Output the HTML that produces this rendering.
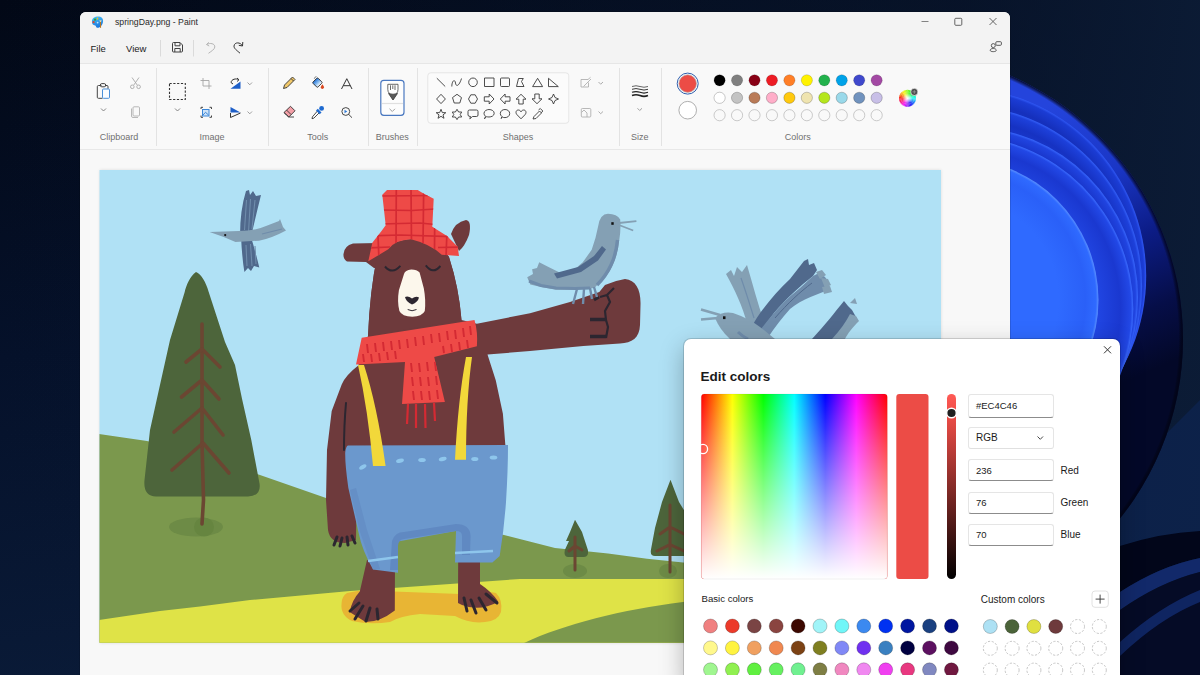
<!DOCTYPE html><html><head><meta charset="utf-8"><style>
*{margin:0;padding:0;box-sizing:border-box}
html,body{width:1200px;height:675px;overflow:hidden;background:#061127;font-family:"Liberation Sans",sans-serif;position:relative}
.a{position:absolute}
.t{position:absolute;white-space:nowrap;color:#1b1b1b;line-height:1}
.lbl{position:absolute;font-size:9px;color:#707070;white-space:nowrap;line-height:1;transform:translateX(-50%)}
.sep{position:absolute;width:1px;background:#e2e2e2}
.box{position:absolute;background:#fff;border:1px solid #e5e5e5;border-bottom:1px solid #8c8c8c;border-radius:3px;font-size:10px;color:#1b1b1b;line-height:1}
svg{position:absolute;overflow:visible}
</style></head><body>
<svg class="a" style="left:0;top:0" width="1200" height="675" viewBox="0 0 1200 675">
<defs>
<linearGradient id="bgv" x1="0" y1="0" x2="0.25" y2="1">
<stop offset="0" stop-color="#020816"/><stop offset="0.5" stop-color="#05112a"/><stop offset="1" stop-color="#0a1b38"/></linearGradient>
<linearGradient id="bgh" x1="0" y1="0" x2="1" y2="0">
<stop offset="0" stop-color="#0b1a33" stop-opacity="0"/><stop offset="0.8" stop-color="#0b1a33" stop-opacity="0.5"/><stop offset="1" stop-color="#0c1c36" stop-opacity="0.9"/></linearGradient>
<linearGradient id="q1" gradientUnits="userSpaceOnUse" x1="1060" y1="100" x2="1175" y2="360"><stop offset="0" stop-color="#2444dc"/><stop offset="0.3" stop-color="#1a36c6"/><stop offset="0.55" stop-color="#0c1c86"/><stop offset="0.8" stop-color="#060e48"/><stop offset="1" stop-color="#030828"/></linearGradient>
<radialGradient id="rim1" gradientUnits="userSpaceOnUse" cx="896" cy="339" r="287"><stop offset="0.9" stop-color="#000" stop-opacity="0"/><stop offset="0.985" stop-color="#000" stop-opacity="0"/><stop offset="1" stop-color="#020418" stop-opacity="0.9"/></radialGradient>
<radialGradient id="pt0" gradientUnits="userSpaceOnUse" cx="957.6" cy="276.2" r="188.6"><stop offset="0" stop-color="#1b3cd4"/><stop offset="0.788" stop-color="#1b3cd4"/><stop offset="0.931" stop-color="#1530bc"/><stop offset="0.987" stop-color="#1b3cd4"/><stop offset="1" stop-color="#3058f4"/></radialGradient>
<radialGradient id="pt1" gradientUnits="userSpaceOnUse" cx="961.1" cy="286.2" r="181.0"><stop offset="0" stop-color="#1d40da"/><stop offset="0.779" stop-color="#1d40da"/><stop offset="0.928" stop-color="#1632c2"/><stop offset="0.986" stop-color="#1d40da"/><stop offset="1" stop-color="#3460f8"/></radialGradient>
<radialGradient id="pt2" gradientUnits="userSpaceOnUse" cx="967.3" cy="297.3" r="170.7"><stop offset="0" stop-color="#2044e0"/><stop offset="0.766" stop-color="#2044e0"/><stop offset="0.924" stop-color="#1834c8"/><stop offset="0.985" stop-color="#2044e0"/><stop offset="1" stop-color="#3866fc"/></radialGradient>
<radialGradient id="pt3" gradientUnits="userSpaceOnUse" cx="959.7" cy="309.1" r="173.6"><stop offset="0" stop-color="#2248e6"/><stop offset="0.770" stop-color="#2248e6"/><stop offset="0.925" stop-color="#1a38d0"/><stop offset="0.986" stop-color="#2248e6"/><stop offset="1" stop-color="#3c6cff"/></radialGradient>
<radialGradient id="pt4" gradientUnits="userSpaceOnUse" cx="957.0" cy="300.0" r="141.5"><stop offset="0" stop-color="#2f6aff"/><stop offset="0.717" stop-color="#2f6aff"/><stop offset="0.908" stop-color="#2a60f8"/><stop offset="0.982" stop-color="#2f6aff"/><stop offset="1" stop-color="#5a90ff"/></radialGradient>
</defs>
<rect width="1200" height="675" fill="url(#bgv)"/>
<rect width="1200" height="675" fill="url(#bgh)"/>
<path d="M1120 480 Q1160 440 1200 400 V533 Q1160 535 1120 546Z" fill="#0e2450" opacity="0.75"/>
<path d="M1120 546 Q1160 533 1200 531 V558 Q1160 566 1120 592Z" fill="#02061a"/>
<path d="M1120 592 Q1160 566 1200 558 V572 Q1160 582 1120 610Z" fill="#12296a"/>
<path d="M1120 610 Q1160 582 1200 572 V675 H1120Z" fill="#050b26"/>
<path d="M1120 642 Q1160 606 1200 590 V602 Q1160 618 1120 656Z" fill="#112868" opacity="0.9"/>
<circle cx="896" cy="339" r="287" fill="url(#q1)"/>
<circle cx="896" cy="339" r="287" fill="url(#rim1)"/>
<circle cx="957.6" cy="276.2" r="188.6" fill="url(#pt0)"/>
<circle cx="961.1" cy="286.2" r="181.0" fill="url(#pt1)"/>
<circle cx="967.3" cy="297.3" r="170.7" fill="url(#pt2)"/>
<circle cx="959.7" cy="309.1" r="173.6" fill="url(#pt3)"/>
<circle cx="957.0" cy="300.0" r="141.5" fill="url(#pt4)"/>
</svg>
<div class="a" style="left:80px;top:11.5px;width:930px;height:670px;background:#f8f8f8;border-radius:6px 6px 0 0;box-shadow:0 0 0 0.5px rgba(0,0,0,.25)"></div>
<div class="a" style="left:80px;top:11.5px;width:930px;height:52px;background:#f3f3f3;border-radius:6px 6px 0 0"></div>
<div class="a" style="left:80px;top:63px;width:930px;height:87px;background:#f9f9f9;border-top:1px solid #e6e6e6;border-bottom:1px solid #e8e8e8"></div>
<div class="a" style="left:99.5px;top:170px;width:841.5px;height:472.8px;background:#b0e1f5;box-shadow:0 0 3px rgba(0,0,0,.12)"></div>
<div class="t" style="left:115px;top:18px;font-size:8.7px;color:#2a2a2a">springDay.png - Paint</div>
<div class="t" style="left:90.5px;top:44px;font-size:9.5px;color:#222">File</div>
<div class="t" style="left:126px;top:44px;font-size:9.5px;color:#222">View</div>
<svg style="left:0;top:0" width="1200" height="675" viewBox="0 0 1200 675">
<defs><linearGradient id="pal" x1="0" y1="0" x2="0.3" y2="1"><stop offset="0" stop-color="#4cc4f4"/><stop offset="1" stop-color="#1a78e0"/></linearGradient></defs>
<g>
<path d="M92 22 C91.5 18 95 16.4 98 16.4 C101.5 16.4 103.2 18.5 103.1 21 C103 24 101.5 26 99.5 27.2 C98 28.2 96.3 28 96 26.5 C95.7 25.2 94.8 25.4 93.6 25 C92.6 24.5 92 23.5 92 22Z" fill="url(#pal)"/>
<circle cx="93.6" cy="22.2" r="1.1" fill="#e0452a"/><circle cx="95" cy="19.7" r="1.1" fill="#2aa83a"/><ellipse cx="97.5" cy="18.7" rx="0.8" ry="1.1" fill="#f2c21a"/>
<circle cx="97.6" cy="22.6" r="0.9" fill="#bfe8ff"/>
<path d="M100.5 21.5 V27.8" stroke="#b8741e" stroke-width="1.1"/>
<path d="M99.3 20.2 L101.7 20.2 L100.9 22 L100.1 22Z" fill="#e8d4a8"/>
</g>
<!-- min max close -->
<path d="M921.5 21.5 H928.5" stroke="#666" stroke-width="0.8"/>
<rect x="954.8" y="18.3" width="7" height="7" rx="1" fill="none" stroke="#555" stroke-width="0.9"/>
<path d="M989.5 18 L996.5 25 M996.5 18 L989.5 25" stroke="#555" stroke-width="0.9"/>
<!-- share icon -->
<g fill="none" stroke="#4a4a4a" stroke-width="0.9">
<circle cx="993.3" cy="45.6" r="2"/>
<path d="M990.2 50.3 C990.2 47.9 996.3 47.9 996.3 50.3 C996.3 52.1 990.2 52.1 990.2 50.3Z"/>
<rect x="995.8" y="41.7" width="5.6" height="3.6" rx="1" fill="#f3f3f3"/>
</g>
<!-- menu separators -->
<path d="M160.5 40 V56.5 M193.5 40 V56.5" stroke="#dadada" stroke-width="1"/>
<!-- save -->
<g fill="none" stroke="#404040" stroke-width="1">
<path d="M172.5 43.5 Q172.5 42.5 173.5 42.5 H180 L182.5 45 V51 Q182.5 52 181.5 52 H173.5 Q172.5 52 172.5 51Z"/>
<path d="M175 42.7 V45.8 H180 V42.7 M174.8 52 V48.5 H180.2 V52"/>
</g>
<!-- undo (disabled) -->
<path d="M206.5 44.5 L208.8 42.3 M206.5 44.5 L209.2 46 M206.7 44.5 C210 42.5 215 43.5 214.8 47 C214.6 49.5 211.5 51 208.5 53.3" fill="none" stroke="#b5b5b5" stroke-width="1"/>
<!-- redo -->
<path d="M242.8 42 L242.5 46 L238.8 45.3 M242.4 45.8 C240.5 42 234.5 41.8 234 46 C233.8 48.5 237 50.5 240 53.2" fill="none" stroke="#333" stroke-width="1"/>
</svg>
<svg style="left:0;top:0" width="1200" height="675" viewBox="0 0 1200 675">
<g stroke="#e3e3e3" stroke-width="1">
<path d="M156.5 68 V146 M268.5 68 V146 M368.5 68 V146 M417.5 68 V146 M619.5 68 V146 M661.5 68 V146"/>
</g>
<!-- paste -->
<g fill="none" stroke-width="1">
<path d="M101.5 85.5 H98.5 Q97.3 85.5 97.3 86.7 V97.3 Q97.3 98.3 98.5 98.3 H102.5" stroke="#444"/>
<path d="M105 85.5 H107 Q108 85.5 108 86.7 V88.8" stroke="#444"/>
<rect x="100.3" y="83.6" width="5.4" height="3.2" rx="1.5" stroke="#444"/>
<rect x="102.5" y="89" width="7" height="9.3" rx="1" stroke="#4a90d9" fill="#fafcff"/>
</g>
<path d="M101 108.5 L103.5 111 L106 108.5" fill="none" stroke="#777" stroke-width="0.9"/>
<!-- scissors -->
<g fill="none" stroke="#a8a8a8" stroke-width="0.9">
<path d="M132 77.5 L137.2 85 M139 77.5 L133.8 85"/>
<circle cx="132.3" cy="86.8" r="1.8"/><circle cx="138.6" cy="86.8" r="1.8"/>
</g>
<!-- copy -->
<g fill="none" stroke="#b0b0b0" stroke-width="0.9">
<rect x="133" y="106.8" width="6.5" height="9.2" rx="1"/>
<path d="M131.5 108.5 V116 Q131.5 117.5 133 117.5 H138"/>
</g>
<!-- select -->
<rect x="169.5" y="83.5" width="15.8" height="16" fill="none" stroke="#333" stroke-width="1.1" stroke-dasharray="2.2 1.6"/>
<path d="M175 108.5 L177.5 111 L180 108.5" fill="none" stroke="#777" stroke-width="0.9"/>
<!-- crop -->
<g fill="none" stroke="#a5a5a5" stroke-width="0.9">
<path d="M203 78 V86 H211.5 M200.5 80.5 H209 V89"/>
</g>
<!-- resize -->
<g fill="none" stroke-width="1">
<path d="M201 109 V107.3 H203 M209.5 107.3 H211.5 V109 M211.5 115.5 V117.3 H209.5 M203 117.3 H201 V115.5" stroke="#444"/>
<rect x="202.5" y="109.5" width="6.5" height="6.5" fill="#cfe3f7" stroke="#3a86d8"/>
<path d="M203 115 L205.5 112.3 L208.5 115" stroke="#3a86d8"/>
</g>
<!-- rotate -->
<g>
<path d="M230.5 88.7 L240.5 81.5 V88.7Z" fill="#1e5fc8"/>
<path d="M231 82.5 C231.5 79 236 78.3 238.5 79.5 M237 78 L239 79.8 L237 81.5" fill="none" stroke="#333" stroke-width="1"/>
<path d="M231 82.5 L233 84" fill="none" stroke="#333" stroke-width="1"/>
</g>
<path d="M247.5 82.5 L249.8 84.8 L252 82.5" fill="none" stroke="#888" stroke-width="0.8"/>
<!-- flip -->
<g>
<path d="M230.5 107 V112.5 H240.5Z" fill="#1e5fc8"/>
<path d="M230.5 113 V117.5 L240.5 113" fill="none" stroke="#333" stroke-width="1"/>
</g>
<path d="M247.5 111.5 L249.8 113.8 L252 111.5" fill="none" stroke="#888" stroke-width="0.8"/>
<!-- pencil -->
<g stroke="#333" stroke-width="0.9" stroke-linejoin="round">
<path d="M283.5 88.5 L284.5 85 L292.5 77 L295 79.5 L287 87.5Z" fill="#f2c96a"/>
<path d="M291 78.5 L293.5 81" fill="none"/>
</g>
<!-- fill bucket -->
<defs><linearGradient id="bkt" x1="0" y1="0" x2="0" y2="1"><stop offset="0" stop-color="#1f6fd6"/><stop offset="0.55" stop-color="#8fc0f0"/><stop offset="1" stop-color="#ffffff"/></linearGradient></defs>
<g transform="translate(317.4 82.6) rotate(-45)"><rect x="-3.6" y="-3.5" width="7.2" height="7" rx="1" fill="url(#bkt)" stroke="#333" stroke-width="0.9"/></g>
<path d="M314.3 78.8 Q314.5 76.8 316.5 76.6" fill="none" stroke="#555" stroke-width="0.7"/>
<path d="M322.4 84.3 Q324.3 86.5 324 87.6 Q323.6 89 322.3 89 Q321 89 320.7 87.6 Q320.6 86.4 322.4 84.3Z" fill="#d9481f"/>
<!-- A -->
<path d="M341.5 89 L346.8 78.7 L352 89 M343.3 85.7 H350.3" fill="none" stroke="#333" stroke-width="1"/>
<!-- eraser -->
<g stroke="#333" stroke-width="0.9" stroke-linejoin="round">
<path d="M284 112.5 L290.5 106.3 L295 110.8 L288.8 117 Z" fill="#f4a0a8"/>
<path d="M284 112.5 L286.8 115.3 L288.8 117 H294" fill="none"/>
<path d="M286.5 110 L291 114.5" fill="none"/>
</g>
<!-- eyedropper -->
<path d="M317.6 110.8 L319.4 112.6 L313.8 118.2 L312 118.7 L312.4 116.9Z" fill="#fff" stroke="#333" stroke-width="0.9" stroke-linejoin="round"/>
<path d="M316.9 109.6 L320.6 113.3" stroke="#1e6ad0" stroke-width="2.6"/>
<circle cx="321.6" cy="108.4" r="2.4" fill="#1e6ad0"/>
<!-- zoom -->
<g fill="none" stroke="#333" stroke-width="0.9">
<circle cx="345.8" cy="111.5" r="3.9"/>
<path d="M348.6 114.3 L352 117.7"/>
</g>
<path d="M344.5 109.7 L347.3 111.5 L344.5 113.3Z" fill="#2f7ad6"/>
<!-- brushes button -->
<rect x="380.8" y="80.3" width="23.2" height="35" rx="3" fill="#fdfdfd" stroke="#4a78c0" stroke-width="1.2"/>
<path d="M382 103.5 H403" stroke="#e0e0e0" stroke-width="1.2"/>
<path d="M389.5 108.8 L392.3 111.5 L395 108.8" fill="none" stroke="#888" stroke-width="0.8"/>
<g stroke="#444" stroke-width="0.8">
<path d="M387.8 84.3 H398 V89.5 Q398 92 396.5 93.5 L393 99.7 L389.5 93.5 Q387.8 92 387.8 89.5Z" fill="#fff"/>
<path d="M388.5 93.5 Q393 95 397.5 93.5 L393 100Z" fill="#5a5a5a"/>
<path d="M390.5 85.3 V90 M392.8 85.3 V89 M395 85.3 V90" fill="none"/>
</g>
<!-- shapes gallery -->
<rect x="427.8" y="72.8" width="141" height="50.5" rx="3" fill="#fbfbfb" stroke="#e6e6e6" stroke-width="1"/>
<g fill="none" stroke="#3a3a3a" stroke-width="0.9" stroke-linejoin="round">
<!-- row1 -->
<path d="M436.8 78.2 L445.2 86.5"/>
<path d="M451.8 86.5 C452 80 455 79 455.5 83 C456 87 459 86.5 461.5 78.5"/>
<circle cx="473" cy="82.3" r="4.3"/>
<rect x="484.5" y="78" width="9.5" height="8.5"/>
<rect x="500.5" y="78" width="9" height="8.5" rx="1"/>
<path d="M516.5 86.5 L518.5 78.5 H523.3 L521.5 81.5 L524 86.5Z"/>
<path d="M532.6 86.6 L537.6 78.3 L542.6 86.6Z"/>
<path d="M548.5 86.6 V78.3 L558.3 86.6Z"/>
<!-- row2 -->
<path d="M441 94.3 L445.4 99 L441 103.6 L436.6 99Z"/>
<path d="M457 94.3 L461.5 97.6 L459.8 103 H454.2 L452.5 97.6Z"/>
<path d="M470.8 94.8 H475.2 L477.5 99 L475.2 103.2 H470.8 L468.5 99Z"/>
<path d="M484.3 96.8 H489.2 V94 L494 99 L489.2 104 V101.2 H484.3Z"/>
<path d="M510 96.8 H505.1 V94 L500.3 99 L505.1 104 V101.2 H510Z"/>
<path d="M518.8 104 V99.2 H516 L521 94.3 L526 99.2 H523.2 V104Z"/>
<path d="M534.8 94 V98.8 H532 L537 103.7 L542 98.8 H539.2 V94Z"/>
<path d="M553.5 94 L555 97.5 L558.5 99 L555 100.5 L553.5 104 L552 100.5 L548.5 99 L552 97.5Z"/>
<!-- row3 -->
<path d="M441 109.3 L442.3 112.6 L445.8 112.7 L443 114.9 L444 118.3 L441 116.3 L438 118.3 L439 114.9 L436.2 112.7 L439.7 112.6Z"/>
<path d="M457 109.3 L458.6 112 L461.7 112 L460.2 114.5 L461.7 117 L458.6 117 L457 119.6 L455.4 117 L452.3 117 L453.8 114.5 L452.3 112 L455.4 112Z"/>
<path d="M469.5 110 H476.5 Q478 110 478 111.5 V115 Q478 116.5 476.5 116.5 H472.5 L469.8 118.8 L470.5 116.5 Q468 116.5 468 115 V111.5 Q468 110 469.5 110Z"/>
<path d="M484.5 118.8 L485.5 116.3 Q484 115 484 113.3 C484 110.8 487 109.5 489 109.5 C491.8 109.5 494.2 111 494.2 113.3 C494.2 115.7 491.5 117 489 117 Q487.5 117 486.5 116.6Z"/>
<path d="M501 118.5 L502 116.5 Q500.3 115.3 500.3 113.6 C500.3 111 502.5 109.5 505 109.5 C507.8 109.5 509.7 111.3 509.7 113.6 C509.7 116 507.5 117.6 505 117.6 Q503.5 117.6 502.5 117.2Z"/>
<path d="M521 118.8 L517 114.7 C515.2 112.8 516 110 518.3 110 C519.6 110 520.5 110.8 521 111.8 C521.5 110.8 522.4 110 523.7 110 C526 110 526.8 112.8 525 114.7Z"/>
<path d="M533 119 L534 116.5 L539.5 111 L541.5 113 L536 118.5Z M538.5 110 L540.3 108.5 L542.8 111 L541.3 112.8"/>
</g>
<!-- outline / fill -->
<g fill="none" stroke="#b0b0b0" stroke-width="0.9">
<path d="M581 79.5 H588 L590.5 77.3 M581 79.5 V87 H588.5 V82.5 M583.5 86.5 L591 79"/>
<rect x="581.3" y="108.5" width="9.5" height="8.5" rx="1"/>
<path d="M581.5 112.5 L584 110 L587 113 V117"/>
</g>
<path d="M598.5 82 L600.7 84.2 L603 82 M598.5 111.5 L600.7 113.7 L603 111.5" fill="none" stroke="#999" stroke-width="0.8"/>
<!-- size -->
<g fill="none" stroke="#222">
<path d="M632 86.5 Q636 85 640 86.5 T648 86.5" stroke-width="0.7"/>
<path d="M632 89.3 Q636 87.8 640 89.3 T648 89.3" stroke-width="0.9"/>
<path d="M632 92.3 Q636 90.8 640 92.3 T648 92.3" stroke-width="1.2"/>
<path d="M632 95.6 Q636 94 640 95.6 T648 95.6" stroke-width="1.6"/>
</g>
<path d="M637.5 108.3 L639.7 110.5 L642 108.3" fill="none" stroke="#888" stroke-width="0.8"/>
</svg>
<div class="lbl" style="left:119px;top:132.5px">Clipboard</div>
<div class="lbl" style="left:212px;top:132.5px">Image</div>
<div class="lbl" style="left:317.7px;top:132.5px">Tools</div>
<div class="lbl" style="left:392.3px;top:132.5px">Brushes</div>
<div class="lbl" style="left:518px;top:132.5px">Shapes</div>
<div class="lbl" style="left:639.7px;top:132.5px">Size</div>
<div class="lbl" style="left:797.7px;top:132.5px">Colors</div>
<svg style="left:0;top:0" width="1200" height="675" viewBox="0 0 1200 675">
<circle cx="687.7" cy="83.6" r="10.5" fill="none" stroke="#2f5fae" stroke-width="1"/>
<circle cx="687.7" cy="83.6" r="8.8" fill="#ec4c46" stroke="#b0b0b0" stroke-width="0.6"/>
<circle cx="687.7" cy="110.2" r="8.8" fill="#ffffff" stroke="#9a9a9a" stroke-width="0.8"/>
<circle cx="719.60" cy="80.3" r="5.6" fill="#000000" stroke="rgba(0,0,0,.25)" stroke-width="0.6"/>
<circle cx="719.60" cy="97.8" r="5.6" fill="#ffffff" stroke="rgba(0,0,0,.35)" stroke-width="0.6"/>
<circle cx="719.60" cy="115.2" r="5.6" fill="none" stroke="#b5b5b5" stroke-width="0.7"/>
<circle cx="737.05" cy="80.3" r="5.6" fill="#7f7f7f" stroke="rgba(0,0,0,.25)" stroke-width="0.6"/>
<circle cx="737.05" cy="97.8" r="5.6" fill="#c3c3c3" stroke="rgba(0,0,0,.35)" stroke-width="0.6"/>
<circle cx="737.05" cy="115.2" r="5.6" fill="none" stroke="#b5b5b5" stroke-width="0.7"/>
<circle cx="754.50" cy="80.3" r="5.6" fill="#880015" stroke="rgba(0,0,0,.25)" stroke-width="0.6"/>
<circle cx="754.50" cy="97.8" r="5.6" fill="#b97a57" stroke="rgba(0,0,0,.35)" stroke-width="0.6"/>
<circle cx="754.50" cy="115.2" r="5.6" fill="none" stroke="#b5b5b5" stroke-width="0.7"/>
<circle cx="771.95" cy="80.3" r="5.6" fill="#ed1c24" stroke="rgba(0,0,0,.25)" stroke-width="0.6"/>
<circle cx="771.95" cy="97.8" r="5.6" fill="#ffaec9" stroke="rgba(0,0,0,.35)" stroke-width="0.6"/>
<circle cx="771.95" cy="115.2" r="5.6" fill="none" stroke="#b5b5b5" stroke-width="0.7"/>
<circle cx="789.40" cy="80.3" r="5.6" fill="#ff7f27" stroke="rgba(0,0,0,.25)" stroke-width="0.6"/>
<circle cx="789.40" cy="97.8" r="5.6" fill="#ffc90e" stroke="rgba(0,0,0,.35)" stroke-width="0.6"/>
<circle cx="789.40" cy="115.2" r="5.6" fill="none" stroke="#b5b5b5" stroke-width="0.7"/>
<circle cx="806.85" cy="80.3" r="5.6" fill="#fff200" stroke="rgba(0,0,0,.25)" stroke-width="0.6"/>
<circle cx="806.85" cy="97.8" r="5.6" fill="#efe4b0" stroke="rgba(0,0,0,.35)" stroke-width="0.6"/>
<circle cx="806.85" cy="115.2" r="5.6" fill="none" stroke="#b5b5b5" stroke-width="0.7"/>
<circle cx="824.30" cy="80.3" r="5.6" fill="#22b14c" stroke="rgba(0,0,0,.25)" stroke-width="0.6"/>
<circle cx="824.30" cy="97.8" r="5.6" fill="#b5e61d" stroke="rgba(0,0,0,.35)" stroke-width="0.6"/>
<circle cx="824.30" cy="115.2" r="5.6" fill="none" stroke="#b5b5b5" stroke-width="0.7"/>
<circle cx="841.75" cy="80.3" r="5.6" fill="#00a2e8" stroke="rgba(0,0,0,.25)" stroke-width="0.6"/>
<circle cx="841.75" cy="97.8" r="5.6" fill="#99d9ea" stroke="rgba(0,0,0,.35)" stroke-width="0.6"/>
<circle cx="841.75" cy="115.2" r="5.6" fill="none" stroke="#b5b5b5" stroke-width="0.7"/>
<circle cx="859.20" cy="80.3" r="5.6" fill="#3f48cc" stroke="rgba(0,0,0,.25)" stroke-width="0.6"/>
<circle cx="859.20" cy="97.8" r="5.6" fill="#7092be" stroke="rgba(0,0,0,.35)" stroke-width="0.6"/>
<circle cx="859.20" cy="115.2" r="5.6" fill="none" stroke="#b5b5b5" stroke-width="0.7"/>
<circle cx="876.65" cy="80.3" r="5.6" fill="#a349a4" stroke="rgba(0,0,0,.25)" stroke-width="0.6"/>
<circle cx="876.65" cy="97.8" r="5.6" fill="#c8bfe7" stroke="rgba(0,0,0,.35)" stroke-width="0.6"/>
<circle cx="876.65" cy="115.2" r="5.6" fill="none" stroke="#b5b5b5" stroke-width="0.7"/>
<defs><radialGradient id="cwW"><stop offset="0" stop-color="#fff"/><stop offset="1" stop-color="#fff" stop-opacity="0"/></radialGradient></defs>
<path d="M907.5 98.3 L916.00 98.30 A8.5 8.5 0 0 1 915.86 99.85Z" fill="hsl(185,95%,55%)"/>
<path d="M907.5 98.3 L915.87 99.78 A8.5 8.5 0 0 1 915.46 101.28Z" fill="hsl(195,95%,55%)"/>
<path d="M907.5 98.3 L915.49 101.21 A8.5 8.5 0 0 1 914.82 102.61Z" fill="hsl(205,95%,55%)"/>
<path d="M907.5 98.3 L914.86 102.55 A8.5 8.5 0 0 1 913.96 103.82Z" fill="hsl(215,95%,55%)"/>
<path d="M907.5 98.3 L914.01 103.76 A8.5 8.5 0 0 1 912.91 104.86Z" fill="hsl(225,95%,55%)"/>
<path d="M907.5 98.3 L912.96 104.81 A8.5 8.5 0 0 1 911.69 105.70Z" fill="hsl(235,95%,55%)"/>
<path d="M907.5 98.3 L911.75 105.66 A8.5 8.5 0 0 1 910.34 106.31Z" fill="hsl(245,95%,55%)"/>
<path d="M907.5 98.3 L910.41 106.29 A8.5 8.5 0 0 1 908.90 106.68Z" fill="hsl(255,95%,55%)"/>
<path d="M907.5 98.3 L908.98 106.67 A8.5 8.5 0 0 1 907.43 106.80Z" fill="hsl(265,95%,55%)"/>
<path d="M907.5 98.3 L907.50 106.80 A8.5 8.5 0 0 1 905.95 106.66Z" fill="hsl(275,95%,55%)"/>
<path d="M907.5 98.3 L906.02 106.67 A8.5 8.5 0 0 1 904.52 106.26Z" fill="hsl(285,95%,55%)"/>
<path d="M907.5 98.3 L904.59 106.29 A8.5 8.5 0 0 1 903.19 105.62Z" fill="hsl(295,95%,55%)"/>
<path d="M907.5 98.3 L903.25 105.66 A8.5 8.5 0 0 1 901.98 104.76Z" fill="hsl(305,95%,55%)"/>
<path d="M907.5 98.3 L902.04 104.81 A8.5 8.5 0 0 1 900.94 103.71Z" fill="hsl(315,95%,55%)"/>
<path d="M907.5 98.3 L900.99 103.76 A8.5 8.5 0 0 1 900.10 102.49Z" fill="hsl(325,95%,55%)"/>
<path d="M907.5 98.3 L900.14 102.55 A8.5 8.5 0 0 1 899.49 101.14Z" fill="hsl(335,95%,55%)"/>
<path d="M907.5 98.3 L899.51 101.21 A8.5 8.5 0 0 1 899.12 99.70Z" fill="hsl(345,95%,55%)"/>
<path d="M907.5 98.3 L899.13 99.78 A8.5 8.5 0 0 1 899.00 98.23Z" fill="hsl(355,95%,55%)"/>
<path d="M907.5 98.3 L899.00 98.30 A8.5 8.5 0 0 1 899.14 96.75Z" fill="hsl(5,95%,55%)"/>
<path d="M907.5 98.3 L899.13 96.82 A8.5 8.5 0 0 1 899.54 95.32Z" fill="hsl(15,95%,55%)"/>
<path d="M907.5 98.3 L899.51 95.39 A8.5 8.5 0 0 1 900.18 93.99Z" fill="hsl(25,95%,55%)"/>
<path d="M907.5 98.3 L900.14 94.05 A8.5 8.5 0 0 1 901.04 92.78Z" fill="hsl(35,95%,55%)"/>
<path d="M907.5 98.3 L900.99 92.84 A8.5 8.5 0 0 1 902.09 91.74Z" fill="hsl(45,95%,55%)"/>
<path d="M907.5 98.3 L902.04 91.79 A8.5 8.5 0 0 1 903.31 90.90Z" fill="hsl(55,95%,55%)"/>
<path d="M907.5 98.3 L903.25 90.94 A8.5 8.5 0 0 1 904.66 90.29Z" fill="hsl(65,95%,55%)"/>
<path d="M907.5 98.3 L904.59 90.31 A8.5 8.5 0 0 1 906.10 89.92Z" fill="hsl(75,95%,55%)"/>
<path d="M907.5 98.3 L906.02 89.93 A8.5 8.5 0 0 1 907.57 89.80Z" fill="hsl(85,95%,55%)"/>
<path d="M907.5 98.3 L907.50 89.80 A8.5 8.5 0 0 1 909.05 89.94Z" fill="hsl(95,95%,55%)"/>
<path d="M907.5 98.3 L908.98 89.93 A8.5 8.5 0 0 1 910.48 90.34Z" fill="hsl(105,95%,55%)"/>
<path d="M907.5 98.3 L910.41 90.31 A8.5 8.5 0 0 1 911.81 90.98Z" fill="hsl(115,95%,55%)"/>
<path d="M907.5 98.3 L911.75 90.94 A8.5 8.5 0 0 1 913.02 91.84Z" fill="hsl(125,95%,55%)"/>
<path d="M907.5 98.3 L912.96 91.79 A8.5 8.5 0 0 1 914.06 92.89Z" fill="hsl(135,95%,55%)"/>
<path d="M907.5 98.3 L914.01 92.84 A8.5 8.5 0 0 1 914.90 94.11Z" fill="hsl(145,95%,55%)"/>
<path d="M907.5 98.3 L914.86 94.05 A8.5 8.5 0 0 1 915.51 95.46Z" fill="hsl(155,95%,55%)"/>
<path d="M907.5 98.3 L915.49 95.39 A8.5 8.5 0 0 1 915.88 96.90Z" fill="hsl(165,95%,55%)"/>
<path d="M907.5 98.3 L915.87 96.82 A8.5 8.5 0 0 1 916.00 98.37Z" fill="hsl(175,95%,55%)"/>
<circle cx="907.5" cy="98.3" r="5" fill="url(#cwW)"/>
<circle cx="914.3" cy="91.9" r="3.6" fill="#4a4a4a" stroke="#f9f9f9" stroke-width="0.7"/>
<path d="M912.3 91.9 H916.3 M914.3 89.9 V93.9" stroke="#aaa" stroke-width="0.6"/>
</svg>
<svg style="left:0;top:0" width="1200" height="675" viewBox="0 0 1200 675">
<defs>
<clipPath id="cv"><rect x="99.5" y="170" width="841.5" height="472.8"/></clipPath>
<clipPath id="hatc"><path d="M382.3 194.7 L387 190 L417.7 190 L423 193.3 L433.7 198.7 L432.3 226.7 L447 236 L457.7 246.7 L459 256 L441.7 254.7 Q430 244 411 239.3 Q395 240 388.3 249.3 L368.3 261.3 L372.3 242.7 L381.7 230.7 L385.7 225.3Z"/></clipPath>
<clipPath id="scfc"><path d="M361.7 337.8 L474.5 320 Q478 332 476.9 346.2 L434.2 357 L444.9 402 L402 404 L405 362 L356 364.4Z"/></clipPath>
</defs>
<g clip-path="url(#cv)">
<rect x="99" y="169" width="843" height="475" fill="#b0e1f5"/>
<!-- hills -->
<path d="M99 434 L147 441 L200 455 L260 475 L326 498 L420 520 L500 534 L555 548 L608 553.5 L647 558.8 L683 562.4 L760 566 L942 570 V645 H99Z" fill="#7b984d"/>
<path d="M99 620 L160 611 L200 606.5 L250 600 L350 591 L450 584 L520 579 L600 579 L683 579 L800 576 L942 575 V645 H99Z" fill="#dfe347"/>
<path d="M520 645 C560 625 620 610 683 602 L800 590 L942 585 V645Z" fill="#7b984d"/>
<!-- tree 1 -->
<ellipse cx="196" cy="527" rx="27" ry="9.5" fill="#6d8b46"/>
<ellipse cx="204" cy="527" rx="10" ry="9.5" fill="#668540"/>
<path d="M196 272 C190 276 186 286 184.7 292 L170 340 L159.3 388 L150 430 L144.5 480 Q143 496 156 496.5 L248 496.5 Q261 496 259.6 484 L251.3 440 L242 398.7 L235 365 L225 342 L208.7 292 C206 282 201 274 196 272Z" fill="#4d653b"/>
<g stroke="#6b4632" stroke-width="3.6" fill="none" stroke-linecap="round" stroke-linejoin="round">
<path d="M202 324 V443 L203.5 500 L202 524"/>
<path d="M202 349 L186 362 M202 349 L220 367 M202 380 L181.5 397 M202 380 L219 399 M202 408 L174 432 M202 408 L223 435 M203 443 L172 470 M203 443 L229 473"/>
</g>
<!-- small trees right -->
<ellipse cx="575" cy="571" rx="12" ry="7" fill="#6d8b46"/>
<path d="M575 519.7 L570 532 L566 541 L569 541 L564.8 550 Q563.5 557 568 557 H584 Q589 557 587.9 550 L582 532Z" fill="#4d653b"/>
<path d="M575 537 V570 M575 546 L569 551 M575 546 L582 550" stroke="#6b4632" stroke-width="3" fill="none" stroke-linecap="round"/>
<ellipse cx="668" cy="571" rx="9" ry="7" fill="#6d8b46"/>
<path d="M670.5 479.8 L662 502 L655 528 L650.9 550 Q650 556 655 556 H690 L690 520 L679 502Z" fill="#4d653b"/>
<path d="M670 505 V572 M670 527 L660 534 M670 527 L684 534 M670 544.6 L657 551 M670 544.6 L684 551" stroke="#6b4632" stroke-width="3" fill="none" stroke-linecap="round"/>

<!-- bear: shadow -->
<path d="M347 593 Q362 589 380 591 L460 594 Q480 589 496 593 Q503 600 501 612 Q498 621 485 622 Q470 624 455 616 L420 614 Q400 616 390 622 Q370 625 352 621 Q340 615 341.6 603 Q342 596 347 593Z" fill="#e8b534"/>
<!-- body -->
<path d="M377 257 Q370 290 368 336 L358.3 365.6 Q346 375 341.7 384.4 L331.7 411 L327 450 L326 500 L328 530 Q330 543 345 543 L356 540 L357 470 L487 460 L507 450 L505.3 444.5 L502.9 413.7 L495.8 380.6 L487.5 354.5 L530 351 L583.3 346 L620 343.5 C632 343 639.5 338 640 325 L640.5 305 C641 290 636 280 625 279 Q615 280.5 605 285 L599.3 292 L570 302 L530 313.3 L476.9 323.7 L461.5 320 Q459 288 449 257 Q436 238 412 239 Q390 240 377 257Z" fill="#6e3a3c"/>
<!-- ears -->
<path d="M343.5 254 Q344 246 353 243.5 L378 243 L382 268 L374 268 L366 262 L347 261.5 Q343 259 343.5 254Z" fill="#6e3a3c"/>
<path d="M466 220 Q472 221 469 235 Q465 246 459 251 L451 234 Q455 222 466 220Z" fill="#6e3a3c"/>
<!-- legs/feet -->
<path d="M367 560 L395 560 L394.8 610.4 Q380 622 365.6 622 L349.6 612 Q352 600 359.8 591.5Z" fill="#6e3a3c"/>
<path d="M458.2 555 L480 555 L480 584 Q492 592 498.3 601.7 Q480 612 462 605 L458 603Z" fill="#6e3a3c"/>
<!-- claws -->
<g stroke="#2c2630" stroke-width="3" fill="none" stroke-linecap="round">
<path d="M359 603 L350 611 M363 606 L355 619 M370 608 L366 621 M377 609 L378 619"/>
<path d="M464 598 L467 611 M471 600 L476 613 M479 598 L486 610 M486 594 L497 603"/>
<path d="M337 537 L334 545 M342 538 L340 546 M347 537 L348 545 M352 536 L355 543"/>
<path d="M346 403 Q344 425 344 450" stroke-width="2"/>
</g>
<!-- pants -->
<path d="M348 445.5 L508 445 Q508 470 506 502 Q504 530 499.7 556 L492.4 562.4 L455 562.4 L456 531 L398 541.6 L398 572.7 L373 569.6 Q362 550 358.7 533.3 L348.3 487.7 Q345 465 345.2 452.4 Q346 446 348 445.5Z" fill="#6b98cd"/>
<path d="M390 570 L392 541 Q395 532 404 532 L456 524 Q470 524 470.6 536 L470 555 L462 555 L462 536 Q462 531 456 531 L404 539 Q398 540 398 546 L398 570Z" fill="#6089c2"/>
<path d="M350 490 L360 532 L373 569.6 L380 569 L367 530 L356 488Z" fill="#6089c2" opacity="0.6"/>
<path d="M368 561 L398 557 M455 553 L493 551" stroke="#8ec6ec" stroke-width="2.6"/>
<g fill="#8ec6ec">
<ellipse cx="362.8" cy="467" rx="4" ry="2" transform="rotate(-30 362.8 467)"/>
<ellipse cx="400" cy="460.7" rx="4" ry="2" transform="rotate(-15 400 460.7)"/>
<ellipse cx="422" cy="460" rx="3.8" ry="2"/>
<ellipse cx="442.7" cy="459" rx="4" ry="2" transform="rotate(-15 442.7 459)"/>
<ellipse cx="474.8" cy="459" rx="3.6" ry="2"/>
<ellipse cx="493.5" cy="457.4" rx="3.8" ry="2"/>
</g>
<!-- suspenders -->
<path d="M358 365 L364 365 Q377 405 385.6 466 L373 466 Q368 410 358 365Z" fill="#f2d83a"/>
<path d="M466 357 L472 357 Q466 400 466 459.7 L455 459.7 Q458 400 466 357Z" fill="#f2d83a"/>
<!-- scarf -->
<g clip-path="url(#scfc)">
<rect x="350" y="315" width="130" height="95" fill="#ee4a47"/>
<g stroke="#d42a33" stroke-width="1.9" fill="none">
<path d="M367 344 L368 353 M375 343 L376 352 M383 342 L384 351 M391 341 L392 350 M399 340 L400 349 M407 339 L408 348 M415 337 L416 346 M423 336 L424 345 M431 334 L432 343 M439 333 L440 342 M447 331 L448 340 M455 330 L456 339 M463 328 L464 337 M470 326 L471 335"/>
<path d="M363 354 L364 362 M371 354 L372 362 M379 353 L380 361 M387 352 L388 360 M395 351 L396 359 M443 346 L444 353 M451 344 L452 352 M459 342 L460 350 M467 340 L468 348"/>
<path d="M411 363 L412 372 M419 363 L420 372 M427 362 L428 371 M435 362 L436 371 M412 377 L413 386 M420 377 L421 386 M428 377 L429 386 M436 376 L437 385 M413 391 L414 400 M421 391 L422 400 M429 391 L430 400 M437 390 L438 399"/>
</g>
</g>
<path d="M408 404 L407 424 M416 404 L416 428 M425 404 L425.5 428 M434 403 L435 421" stroke="#d42a33" stroke-width="2.2" fill="none"/>
<!-- head -->
<path d="M377 257 Q370 290 368 336 L461.5 320 Q459 288 449 257 Q436 238 412 239 Q390 240 377 257Z" fill="#6e3a3c"/>
<!-- hat -->
<g clip-path="url(#hatc)">
<rect x="360" y="185" width="105" height="80" fill="#ee4a47"/>
<g stroke="#d42a33" stroke-width="1.7" fill="none">
<path d="M396.3 188 L396 250 M411 188 L411.5 242 M423.7 188 L423 245 M435 188 L434.5 250 M447 230 L446 258 M378 236 L379 260"/>
<path d="M380 196 L435 195.5 M380 210 L412 210.5 L435 209 M380 224 L420 223 L435 224.5 M368 236 L400 235 L460 237 M365 248 L390 247 M438 247.5 L462 247"/>
</g>
</g>
<!-- muzzle -->
<path d="M411.3 269.5 Q405 270 404 274 L398.9 290.3 Q397 302 399.4 311 Q402 316.7 412.3 316.7 Q422 316.7 424.8 311 Q426 300 423.8 288.2 L419.6 272.6 Q417 269.5 411.3 269.5Z" fill="#fcf7ec"/>
<path d="M405 297 Q408 295.5 412 298.5 Q416 295.5 419 297.5 Q418 302 412 304.5 Q406 302 405 297Z" fill="#2c2630"/>
<path d="M407.7 309.5 Q412 312 416.5 309.5" stroke="#2c2630" stroke-width="1" fill="none"/>
<path d="M385 266.5 Q392 275 400.4 265.9 M425.8 265.4 Q433 275 440.4 266" stroke="#2c2630" stroke-width="2" fill="none"/>
<!-- paw marks -->
<g stroke="#2c2630" fill="none" stroke-linejoin="round" stroke-linecap="butt">
<path d="M614 288 L607 295 L600 297 M607 295 L610 302 L605 311 L606 320 L608 327 L606 338" stroke-width="2.2"/>
<path d="M590 319.5 H606 M590 336.5 H606" stroke-width="3.6"/>
<path d="M599 297 L594 300" stroke-width="3"/>
</g>
<!-- bird 1 -->
<g>
<path d="M240 236 Q240 210 246 191 L249 190 L250 195 L253 191 L256 196 L261 195 Q256 215 251 237Z" fill="#50698c"/>
<path d="M246.5 200 L244.5 230 M250.5 199 L248.5 232 M255 200 L252 229" stroke="#6f8cab" stroke-width="1.1" fill="none"/>
<path d="M241 236 Q242 258 244.4 272 L248 268 L251 271 L254 266 L259.3 267.4 Q255 250 251 237Z" fill="#50698c"/>
<path d="M246 245 L247 266 M250.5 244 L252 266 M255 246 L256 264" stroke="#6f8cab" stroke-width="1.1" fill="none"/>
<path d="M209.6 232 L238.5 231 Q255 231 266 226 L279 221 L280 219 L283 227 L286 230.4 Q272 238 259 240.7 L235.5 242 Q222 236 209.6 232Z" fill="#84a0b4"/>
<path d="M262 234 L282 229" stroke="#6f8cab" stroke-width="1.2"/>
<circle cx="225.2" cy="235.1" r="1.1" fill="#111"/>
</g>
<!-- bird 2 -->
<g>
<path d="M598.2 226 Q600 214 608 213.8 Q617 214 620.2 219.5 Q621 230 619.3 240 Q618 252 613.9 262.2 Q610 272 605 277.3 L594.3 288 L574.8 289.8 L556 289.8 L541 287.1 L530.3 284.4 L527.2 277.3 L533 274 L532.1 269.3 L537 268 L539.2 262.2 L548 266.7 L560.6 273 L574.8 269.3 L582.8 262.2 L591.7 249.8 Q596 238 598.2 226Z" fill="#84a0b4"/>
<path d="M554 273.5 L578 267 L594 256 L602 246 L606 249.5 L598 260.5 L581 272 L557 278.5Z" fill="#50698c"/>
<path d="M617.5 240 Q616 255 611 265 Q606 276 597 285" stroke="#6f8cab" stroke-width="3.4" fill="none"/>
<path d="M529 281 L541 285.5 L556 288 L575 288.5 L590 288" stroke="#6f8cab" stroke-width="3" fill="none"/>
<path d="M619 223 L636.4 221.2 M619 225 L633.2 230.5" stroke="#84a0b4" stroke-width="1.8"/>
<rect x="611.3" y="222.2" width="2.4" height="2.6" fill="#111"/>
<path d="M577 289 L573 304 M584 289 L583 304 M590 288 L592 299 M594 287 L597 297" stroke="#6f8cab" stroke-width="2.4"/>
</g>
<!-- bird 3 -->
<g>
<path d="M748 326 C742 305 735 290 726 274 L731 270 L734 276 L737 267 L742 272 L747 265 C753 285 758 305 765 324Z" fill="#84a0b4"/>
<path d="M741 278 C746 292 750 305 754 318" stroke="#6f8cab" stroke-width="1.2" fill="none"/>
<path d="M751 328 C760 311 775 293 790 279 L804 261 L808 259 L809 265 L814 263 L817 270 L813 276 C800 286 786 299 774 313 L760 332Z" fill="#50698c"/>
<path d="M758 333 C772 314 786 299 800 288 L813 276 L819 273 L825 277 L829 283 L828 290 L810.5 297 C803 300 796 304 790 309 C782 318 775 327 769 336 L765 339 L756 339Z" fill="#6f8cab"/>
<path d="M816 272 L822 270 L826 275 L820 279Z M821 278 L828 279 L831 285 L825 288Z M822 287 L830 286 L832 292 L824 294Z" fill="#84a0b4"/>
<path d="M775 318 C788 303 800 292 812 283" stroke="#50698c" stroke-width="1" fill="none"/>
<path d="M701 309.5 L720 315 M701 319.5 L718 318" stroke="#84a0b4" stroke-width="2.6" fill="none"/>
<path d="M715 318 Q722 311 733 313 Q748 318 760 327 L775 339 L730 339 Q720 330 715 318Z" fill="#84a0b4"/>
<path d="M738 332 Q742 336 748 339" stroke="#6f8cab" stroke-width="3" fill="none"/>
<path d="M812 339 C825 325 835 312 844 301 L848 306 L852 310 L858 320.5 C848 328 843 333 838 339Z" fill="#50698c"/>
<path d="M832 339 C840 330 846 322 850 314 L856 316 L859 321 C852 328 848 333 845 339Z" fill="#84a0b4"/>
<path d="M850 303 L855 298 L857 304Z" fill="#84a0b4"/>
<rect x="723" y="316.3" width="2.5" height="2.8" fill="#111"/>
</g>
</g>
</svg>
<div class="a" style="left:684px;top:339px;width:436px;height:345px;background:#ffffff;border-radius:7px;box-shadow:0 0 0 1px rgba(0,0,0,.14),0 8px 24px rgba(0,0,0,.28)"></div>
<div class="t" style="left:700.5px;top:369.5px;font-size:13.5px;font-weight:bold;color:#1a1a1a">Edit colors</div>
<svg style="left:0;top:0" width="1200" height="675" viewBox="0 0 1200 675">
<defs>
<linearGradient id="hue" x1="0" y1="0" x2="1" y2="0">
<stop offset="0" stop-color="#ff0000"/><stop offset="0.1667" stop-color="#ffff00"/><stop offset="0.3333" stop-color="#00ff00"/><stop offset="0.5" stop-color="#00ffff"/><stop offset="0.6667" stop-color="#0000ff"/><stop offset="0.8333" stop-color="#ff00ff"/><stop offset="1" stop-color="#ff0000"/>
</linearGradient>
<linearGradient id="wht" x1="0" y1="0" x2="0" y2="1">
<stop offset="0" stop-color="#ffffff" stop-opacity="0"/><stop offset="1" stop-color="#ffffff" stop-opacity="1"/>
</linearGradient>
<linearGradient id="sld" x1="0" y1="0" x2="0" y2="1">
<stop offset="0" stop-color="#ff5a55"/><stop offset="0.12" stop-color="#ec4c46"/><stop offset="1" stop-color="#000000"/>
</linearGradient>
</defs>
<rect x="701.3" y="394" width="186" height="185" rx="3" fill="url(#hue)"/>
<rect x="701.3" y="394" width="186" height="185" rx="3" fill="url(#wht)"/>
<rect x="701.3" y="394" width="186" height="185" rx="3" fill="none" stroke="rgba(0,0,0,.06)" stroke-width="1"/>
<circle cx="703" cy="449" r="4.6" fill="none" stroke="#fff" stroke-width="1.3"/>
<rect x="896.3" y="394" width="32.2" height="185" rx="3" fill="#ec4c46"/>
<rect x="947" y="394" width="9" height="185" rx="4.5" fill="url(#sld)"/>
<circle cx="951.5" cy="413" r="4.8" fill="#1f1f1f" stroke="#fff" stroke-width="1.4"/>
<path d="M1104 346.3 L1111 353.3 M1111 346.3 L1104 353.3" stroke="#333" stroke-width="1"/>
</svg>
<div class="box" style="left:968px;top:394.2px;width:86px;height:23.5px"></div>
<div class="t" style="left:976px;top:401.3px;font-size:9.5px;color:#1b1b1b">#EC4C46</div>
<div class="box" style="left:968px;top:459.3px;width:86px;height:22.2px"></div>
<div class="t" style="left:976px;top:465.8px;font-size:9.5px;color:#1b1b1b">236</div>
<div class="box" style="left:968px;top:491.5px;width:86px;height:22.8px"></div>
<div class="t" style="left:976px;top:498.3px;font-size:9.5px;color:#1b1b1b">76</div>
<div class="box" style="left:968px;top:523.6px;width:86px;height:22.9px"></div>
<div class="t" style="left:976px;top:530.4px;font-size:9.5px;color:#1b1b1b">70</div>
<div class="box" style="left:968px;top:427px;width:86px;height:22px;border-bottom-color:#e0e0e0"></div>
<div class="t" style="left:976px;top:432.8px;font-size:10px;color:#1b1b1b">RGB</div>
<svg style="left:0;top:0" width="1200" height="675" viewBox="0 0 1200 675"><path d="M1037.5 436.5 L1040.3 439.3 L1043 436.5" fill="none" stroke="#333" stroke-width="0.9"/></svg>
<div class="t" style="left:1060.5px;top:465.8px;font-size:10px;color:#1b1b1b">Red</div>
<div class="t" style="left:1060.5px;top:498.4px;font-size:10px;color:#1b1b1b">Green</div>
<div class="t" style="left:1060.5px;top:530.4px;font-size:10px;color:#1b1b1b">Blue</div>
<div class="t" style="left:701.5px;top:594px;font-size:9.6px;color:#1b1b1b">Basic colors</div>
<div class="t" style="left:980.8px;top:594.5px;font-size:10px;color:#1b1b1b">Custom colors</div>
<svg style="left:0;top:0" width="1200" height="675" viewBox="0 0 1200 675">
<rect x="1092" y="591" width="16.3" height="16.3" rx="3" fill="#fff" stroke="#e2e2e2" stroke-width="1"/>
<path d="M1095.6 599.1 H1104.6 M1100.1 594.6 V603.6" stroke="#333" stroke-width="0.9"/>
<circle cx="710.5" cy="626.0" r="7" fill="#f08080" stroke="rgba(0,0,0,.3)" stroke-width="0.7"/>
<circle cx="732.4" cy="626.0" r="7" fill="#ec3a2a" stroke="rgba(0,0,0,.3)" stroke-width="0.7"/>
<circle cx="754.3" cy="626.0" r="7" fill="#7a4444" stroke="rgba(0,0,0,.3)" stroke-width="0.7"/>
<circle cx="776.2" cy="626.0" r="7" fill="#8a4440" stroke="rgba(0,0,0,.3)" stroke-width="0.7"/>
<circle cx="798.1" cy="626.0" r="7" fill="#3c0800" stroke="rgba(0,0,0,.3)" stroke-width="0.7"/>
<circle cx="820.0" cy="626.0" r="7" fill="#a0f4f8" stroke="rgba(0,0,0,.3)" stroke-width="0.7"/>
<circle cx="841.9" cy="626.0" r="7" fill="#70f6f8" stroke="rgba(0,0,0,.3)" stroke-width="0.7"/>
<circle cx="863.8" cy="626.0" r="7" fill="#3b89f0" stroke="rgba(0,0,0,.3)" stroke-width="0.7"/>
<circle cx="885.7" cy="626.0" r="7" fill="#0031f2" stroke="rgba(0,0,0,.3)" stroke-width="0.7"/>
<circle cx="907.6" cy="626.0" r="7" fill="#0016a0" stroke="rgba(0,0,0,.3)" stroke-width="0.7"/>
<circle cx="929.5" cy="626.0" r="7" fill="#1a4080" stroke="rgba(0,0,0,.3)" stroke-width="0.7"/>
<circle cx="951.4" cy="626.0" r="7" fill="#001088" stroke="rgba(0,0,0,.3)" stroke-width="0.7"/>
<circle cx="710.5" cy="647.9" r="7" fill="#fff88c" stroke="rgba(0,0,0,.3)" stroke-width="0.7"/>
<circle cx="732.4" cy="647.9" r="7" fill="#fff340" stroke="rgba(0,0,0,.3)" stroke-width="0.7"/>
<circle cx="754.3" cy="647.9" r="7" fill="#f0a060" stroke="rgba(0,0,0,.3)" stroke-width="0.7"/>
<circle cx="776.2" cy="647.9" r="7" fill="#f08850" stroke="rgba(0,0,0,.3)" stroke-width="0.7"/>
<circle cx="798.1" cy="647.9" r="7" fill="#7c4214" stroke="rgba(0,0,0,.3)" stroke-width="0.7"/>
<circle cx="820.0" cy="647.9" r="7" fill="#7f7f20" stroke="rgba(0,0,0,.3)" stroke-width="0.7"/>
<circle cx="841.9" cy="647.9" r="7" fill="#8088f6" stroke="rgba(0,0,0,.3)" stroke-width="0.7"/>
<circle cx="863.8" cy="647.9" r="7" fill="#7030f0" stroke="rgba(0,0,0,.3)" stroke-width="0.7"/>
<circle cx="885.7" cy="647.9" r="7" fill="#3a80c0" stroke="rgba(0,0,0,.3)" stroke-width="0.7"/>
<circle cx="907.6" cy="647.9" r="7" fill="#000040" stroke="rgba(0,0,0,.3)" stroke-width="0.7"/>
<circle cx="929.5" cy="647.9" r="7" fill="#5c1060" stroke="rgba(0,0,0,.3)" stroke-width="0.7"/>
<circle cx="951.4" cy="647.9" r="7" fill="#3e0840" stroke="rgba(0,0,0,.3)" stroke-width="0.7"/>
<circle cx="710.5" cy="669.8" r="7" fill="#a0f690" stroke="rgba(0,0,0,.3)" stroke-width="0.7"/>
<circle cx="732.4" cy="669.8" r="7" fill="#90f050" stroke="rgba(0,0,0,.3)" stroke-width="0.7"/>
<circle cx="754.3" cy="669.8" r="7" fill="#60f040" stroke="rgba(0,0,0,.3)" stroke-width="0.7"/>
<circle cx="776.2" cy="669.8" r="7" fill="#66f060" stroke="rgba(0,0,0,.3)" stroke-width="0.7"/>
<circle cx="798.1" cy="669.8" r="7" fill="#70f090" stroke="rgba(0,0,0,.3)" stroke-width="0.7"/>
<circle cx="820.0" cy="669.8" r="7" fill="#7e7e44" stroke="rgba(0,0,0,.3)" stroke-width="0.7"/>
<circle cx="841.9" cy="669.8" r="7" fill="#f088c0" stroke="rgba(0,0,0,.3)" stroke-width="0.7"/>
<circle cx="863.8" cy="669.8" r="7" fill="#f088f0" stroke="rgba(0,0,0,.3)" stroke-width="0.7"/>
<circle cx="885.7" cy="669.8" r="7" fill="#f040f0" stroke="rgba(0,0,0,.3)" stroke-width="0.7"/>
<circle cx="907.6" cy="669.8" r="7" fill="#e83880" stroke="rgba(0,0,0,.3)" stroke-width="0.7"/>
<circle cx="929.5" cy="669.8" r="7" fill="#8088c0" stroke="rgba(0,0,0,.3)" stroke-width="0.7"/>
<circle cx="951.4" cy="669.8" r="7" fill="#701840" stroke="rgba(0,0,0,.3)" stroke-width="0.7"/>
<circle cx="990.3" cy="626.5" r="7" fill="#ade1f4" stroke="rgba(0,0,0,.3)" stroke-width="0.7"/>
<circle cx="1012.1" cy="626.5" r="7" fill="#4b6339" stroke="rgba(0,0,0,.3)" stroke-width="0.7"/>
<circle cx="1033.9" cy="626.5" r="7" fill="#e0e040" stroke="rgba(0,0,0,.3)" stroke-width="0.7"/>
<circle cx="1055.7" cy="626.5" r="7" fill="#6e3a3c" stroke="rgba(0,0,0,.3)" stroke-width="0.7"/>
<circle cx="1077.5" cy="626.5" r="7" fill="none" stroke="#b8b8b8" stroke-width="0.8" stroke-dasharray="2.2 1.6"/>
<circle cx="1099.3" cy="626.5" r="7" fill="none" stroke="#b8b8b8" stroke-width="0.8" stroke-dasharray="2.2 1.6"/>
<circle cx="990.3" cy="648.3" r="7" fill="none" stroke="#b8b8b8" stroke-width="0.8" stroke-dasharray="2.2 1.6"/>
<circle cx="1012.1" cy="648.3" r="7" fill="none" stroke="#b8b8b8" stroke-width="0.8" stroke-dasharray="2.2 1.6"/>
<circle cx="1033.9" cy="648.3" r="7" fill="none" stroke="#b8b8b8" stroke-width="0.8" stroke-dasharray="2.2 1.6"/>
<circle cx="1055.7" cy="648.3" r="7" fill="none" stroke="#b8b8b8" stroke-width="0.8" stroke-dasharray="2.2 1.6"/>
<circle cx="1077.5" cy="648.3" r="7" fill="none" stroke="#b8b8b8" stroke-width="0.8" stroke-dasharray="2.2 1.6"/>
<circle cx="1099.3" cy="648.3" r="7" fill="none" stroke="#b8b8b8" stroke-width="0.8" stroke-dasharray="2.2 1.6"/>
<circle cx="990.3" cy="670.1" r="7" fill="none" stroke="#b8b8b8" stroke-width="0.8" stroke-dasharray="2.2 1.6"/>
<circle cx="1012.1" cy="670.1" r="7" fill="none" stroke="#b8b8b8" stroke-width="0.8" stroke-dasharray="2.2 1.6"/>
<circle cx="1033.9" cy="670.1" r="7" fill="none" stroke="#b8b8b8" stroke-width="0.8" stroke-dasharray="2.2 1.6"/>
<circle cx="1055.7" cy="670.1" r="7" fill="none" stroke="#b8b8b8" stroke-width="0.8" stroke-dasharray="2.2 1.6"/>
<circle cx="1077.5" cy="670.1" r="7" fill="none" stroke="#b8b8b8" stroke-width="0.8" stroke-dasharray="2.2 1.6"/>
<circle cx="1099.3" cy="670.1" r="7" fill="none" stroke="#b8b8b8" stroke-width="0.8" stroke-dasharray="2.2 1.6"/>
</svg>
</body></html>
